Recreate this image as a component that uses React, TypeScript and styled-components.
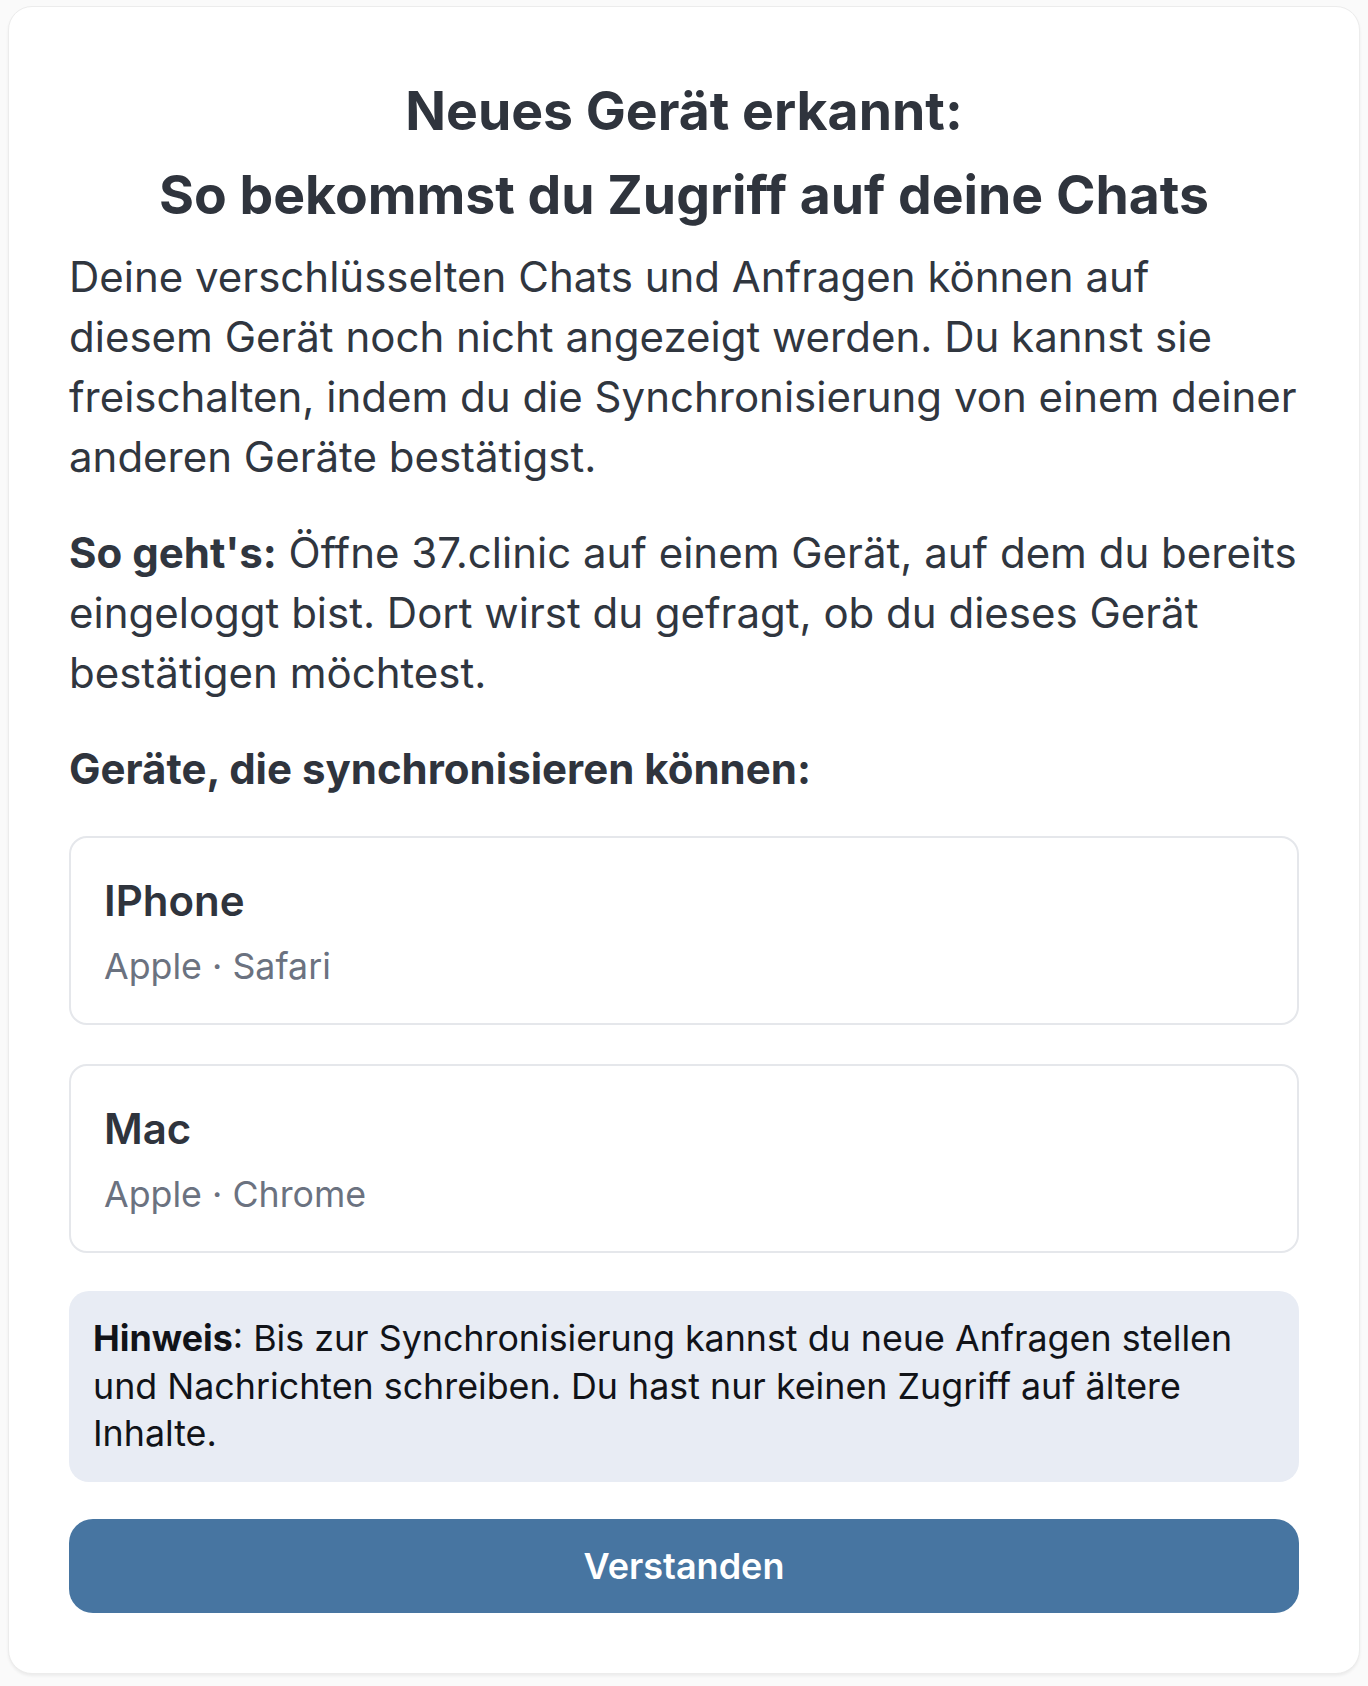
import React from 'react';
import styled, { createGlobalStyle } from 'styled-components';

const GlobalStyle = createGlobalStyle`
  html, body {
    margin: 0;
    padding: 0;
    background: #fafafa;
  }
  body {
    padding: 6px 8px 12px;
    font-family: Inter, "Noto Sans", "Liberation Sans", sans-serif;
    color: #2f343d;
  }
  * {
    box-sizing: border-box;
  }
`;

const Dialog = styled.div`
  background: #ffffff;
  border: 1px solid #ececec;
  border-radius: 24px;
  box-shadow: 0 2px 3px rgba(0, 0, 0, 0.06);
  padding: 62px 60px 60px;
  display: flex;
  flex-direction: column;
`;

const Title = styled.h1`
  margin: 0 0 10px;
  text-align: center;
  font-size: 53.5px;
  font-weight: 700;
  line-height: 84px;
  color: #2f343d;
`;

const Paragraph = styled.p`
  margin: 0 0 36px;
  font-size: 42px;
  line-height: 60px;
  color: #30363f;

  strong {
    font-weight: 700;
  }
`;

const SectionHeading = styled.h2`
  margin: 0 0 37px;
  font-size: 42px;
  line-height: 60px;
  font-weight: 700;
  color: #2f343d;
`;

const DeviceList = styled.div`
  display: flex;
  flex-direction: column;
  gap: 39px;
  margin-bottom: 38px;
`;

const DeviceCard = styled.div`
  border: 2px solid #e5e7eb;
  border-radius: 18px;
  padding: 34px 33px 32px;
  display: flex;
  flex-direction: column;
  gap: 11px;
`;

const DeviceName = styled.div`
  font-size: 42px;
  line-height: 58px;
  font-weight: 600;
  color: #2f343d;
`;

const DeviceMeta = styled.div`
  font-size: 35.75px;
  line-height: 50px;
  color: #6b7280;
`;

const Notice = styled.div`
  background: #e8ecf4;
  border-radius: 20px;
  padding: 24px;
  font-size: 35.8px;
  line-height: 47.5px;
  color: #111318;
  margin-bottom: 37px;

  strong {
    font-weight: 700;
  }
`;

const PrimaryButton = styled.button`
  height: 94px;
  border: none;
  border-radius: 24px;
  background: #4775a1;
  color: #ffffff;
  font-family: inherit;
  font-size: 36px;
  font-weight: 600;
  cursor: pointer;
`;

const devices = [
  { name: 'IPhone', vendor: 'Apple', browser: 'Safari' },
  { name: 'Mac', vendor: 'Apple', browser: 'Chrome' },
];

const App: React.FC = () => {
  return (
    <>
      <GlobalStyle />
      <Dialog>
        <Title>
          Neues Gerät erkannt:
          <br />
          So bekommst du Zugriff auf deine Chats
        </Title>
        <Paragraph>
          Deine verschlüsselten Chats und Anfragen können auf diesem Gerät noch nicht angezeigt
          werden. Du kannst sie freischalten, indem du die Synchronisierung von einem deiner
          anderen Geräte bestätigst.
        </Paragraph>
        <Paragraph>
          <strong>So geht's:</strong> Öffne 37.clinic auf einem Gerät, auf dem du bereits
          eingeloggt bist. Dort wirst du gefragt, ob du dieses Gerät bestätigen möchtest.
        </Paragraph>
        <SectionHeading>Geräte, die synchronisieren können:</SectionHeading>
        <DeviceList>
          {devices.map((d) => (
            <DeviceCard key={d.name}>
              <DeviceName>{d.name}</DeviceName>
              <DeviceMeta>
                {d.vendor} · {d.browser}
              </DeviceMeta>
            </DeviceCard>
          ))}
        </DeviceList>
        <Notice>
          <strong>Hinweis</strong>: Bis zur Synchronisierung kannst du neue Anfragen stellen und
          Nachrichten schreiben. Du hast nur keinen Zugriff auf ältere Inhalte.
        </Notice>
        <PrimaryButton>Verstanden</PrimaryButton>
      </Dialog>
    </>
  );
};

export default App;
